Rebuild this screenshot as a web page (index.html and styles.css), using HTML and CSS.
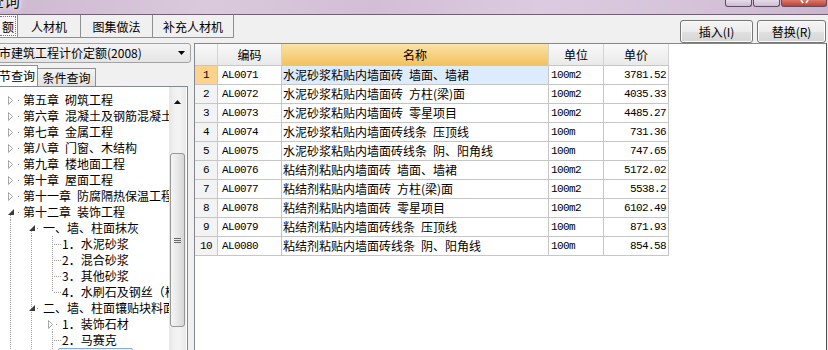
FILE: index.html
```html
<!DOCTYPE html>
<html lang="zh-CN">
<head>
<meta charset="utf-8">
<title>定额查询</title>
<link rel="stylesheet" href="styles.css">
</head>
<body>
<div class="window">
  <div class="titlebar">
    <span class="title">定额查询</span>
    <div class="winbtns">
      <span class="wb"></span>
      <span class="wb"></span>
      <span class="wb close"><svg width="9" height="4" viewBox="0 0 9 4"><path d="M1 0L3 3M8 0L6 3" stroke="#fff" stroke-width="1.6" fill="none"/></svg></span>
    </div>
  </div>

  <div class="toolbar">
    <div class="tabs">
      <div class="tab tab-active"><span class="focus">额</span></div>
      <div class="tab tab-w1">人材机</div>
      <div class="tab tab-w2">图集做法</div>
      <div class="tab tab-w3">补充人材机</div>
    </div>
    <div class="actions">
      <button class="btn btn-insert">插入(I)</button>
      <button class="btn btn-replace">替换(R)</button>
    </div>
  </div>

  <div class="main">
    <div class="left">
      <div class="combo">
        <span class="combo-text">市建筑工程计价定额(2008)</span>
        <svg class="combo-arrow" width="7" height="4" viewBox="0 0 7 4"><path d="M0 0H7L3.5 4Z" fill="#000"/></svg>
      </div>
      <div class="subtabs">
        <div class="subtab subtab-active">节查询</div>
        <div class="subtab">条件查询</div>
      </div>
      <div class="treebox">
        <div class="tree">
          <div class="node l0"><svg class="c" width="21" height="16"><path d="M8.5 4.5L12.5 8.5L8.5 12.5Z" fill="#fff" stroke="#a6a6a6"/><rect x="18" y="8" width="1" height="1" fill="#999"/></svg><span class="t">第五章&#8194;砌筑工程</span></div>
          <div class="node l0"><svg class="c" width="21" height="16"><path d="M8.5 4.5L12.5 8.5L8.5 12.5Z" fill="#fff" stroke="#a6a6a6"/><rect x="18" y="8" width="1" height="1" fill="#999"/></svg><span class="t">第六章&#8194;混凝土及钢筋混凝土工程</span></div>
          <div class="node l0"><svg class="c" width="21" height="16"><path d="M8.5 4.5L12.5 8.5L8.5 12.5Z" fill="#fff" stroke="#a6a6a6"/><rect x="18" y="8" width="1" height="1" fill="#999"/></svg><span class="t">第七章&#8194;金属工程</span></div>
          <div class="node l0"><svg class="c" width="21" height="16"><path d="M8.5 4.5L12.5 8.5L8.5 12.5Z" fill="#fff" stroke="#a6a6a6"/><rect x="18" y="8" width="1" height="1" fill="#999"/></svg><span class="t">第八章&#8194;门窗、木结构</span></div>
          <div class="node l0"><svg class="c" width="21" height="16"><path d="M8.5 4.5L12.5 8.5L8.5 12.5Z" fill="#fff" stroke="#a6a6a6"/><rect x="18" y="8" width="1" height="1" fill="#999"/></svg><span class="t">第九章&#8194;楼地面工程</span></div>
          <div class="node l0"><svg class="c" width="21" height="16"><path d="M8.5 4.5L12.5 8.5L8.5 12.5Z" fill="#fff" stroke="#a6a6a6"/><rect x="18" y="8" width="1" height="1" fill="#999"/></svg><span class="t">第十章&#8194;屋面工程</span></div>
          <div class="node l0"><svg class="c" width="21" height="16"><path d="M8.5 4.5L12.5 8.5L8.5 12.5Z" fill="#fff" stroke="#a6a6a6"/><rect x="18" y="8" width="1" height="1" fill="#999"/></svg><span class="t">第十一章&#8194;防腐隔热保温工程</span></div>
          <div class="node l0"><svg class="c" width="21" height="16"><path class="dl" d="M10.5 11V16"/><path d="M14 5V11H8Z" fill="#3a3a3a"/><rect x="18" y="8" width="1" height="1" fill="#999"/></svg><span class="t">第十二章&#8194;装饰工程</span></div>

          <div class="node l1"><svg class="c" width="21" height="16"><path class="dl" d="M10.5 0V16"/></svg><svg class="c" width="21" height="16"><path class="dl" d="M10.5 11V16"/><path d="M14 5V11H8Z" fill="#3a3a3a"/><rect x="16" y="8" width="1" height="1" fill="#999"/></svg><span class="t">一、墙、柱面抹灰</span></div>
          <div class="node l2"><svg class="c" width="21" height="16"><path class="dl" d="M10.5 0V16"/></svg><svg class="c" width="21" height="16"><path class="dl" d="M10.5 0V16"/></svg><svg class="c2" width="19" height="16"><path class="dl" d="M10.5 0V16M12 8.5H19"/></svg><span class="t">1．水泥砂浆</span></div>
          <div class="node l2"><svg class="c" width="21" height="16"><path class="dl" d="M10.5 0V16"/></svg><svg class="c" width="21" height="16"><path class="dl" d="M10.5 0V16"/></svg><svg class="c2" width="19" height="16"><path class="dl" d="M10.5 0V16M12 8.5H19"/></svg><span class="t">2．混合砂浆</span></div>
          <div class="node l2"><svg class="c" width="21" height="16"><path class="dl" d="M10.5 0V16"/></svg><svg class="c" width="21" height="16"><path class="dl" d="M10.5 0V16"/></svg><svg class="c2" width="19" height="16"><path class="dl" d="M10.5 0V16M12 8.5H19"/></svg><span class="t">3．其他砂浆</span></div>
          <div class="node l2"><svg class="c" width="21" height="16"><path class="dl" d="M10.5 0V16"/></svg><svg class="c" width="21" height="16"><path class="dl" d="M10.5 0V16"/></svg><svg class="c2" width="19" height="16"><path class="dl" d="M10.5 0V8M12 8.5H19"/></svg><span class="t">4．水刷石及钢丝（栏杆）</span></div>

          <div class="node l1"><svg class="c" width="21" height="16"><path class="dl" d="M10.5 0V16"/></svg><svg class="c" width="21" height="16"><path class="dl" d="M10.5 0V16"/><path d="M14 5V11H8Z" fill="#3a3a3a"/><rect x="16" y="8" width="1" height="1" fill="#999"/></svg><span class="t">二、墙、柱面镶贴块料面层</span></div>
          <div class="node l2"><svg class="c" width="21" height="16"><path class="dl" d="M10.5 0V16"/></svg><svg class="c" width="21" height="16"><path class="dl" d="M10.5 0V16"/></svg><svg class="c2" width="19" height="16"><path class="dl" d="M10.5 13V16"/><path d="M6.5 4.5L10.5 8.5L6.5 12.5Z" fill="#fff" stroke="#a6a6a6"/><rect x="14" y="8" width="1" height="1" fill="#999"/></svg><span class="t">1．装饰石材</span></div>
          <div class="node l2"><svg class="c" width="21" height="16"><path class="dl" d="M10.5 0V16"/></svg><svg class="c" width="21" height="16"><path class="dl" d="M10.5 0V16"/></svg><svg class="c2" width="19" height="16"><path class="dl" d="M10.5 0V16M12 8.5H19"/></svg><span class="t">2．马赛克</span></div>
          <div class="node l2"><svg class="c" width="21" height="16"><path class="dl" d="M10.5 0V16"/></svg><svg class="c" width="21" height="16"><path class="dl" d="M10.5 0V16"/></svg><svg class="c2" width="19" height="16"><path class="dl" d="M10.5 0V8M12 8.5H19"/></svg><span class="t t-sel">3．釉面瓷砖</span></div>
        </div>
        <div class="vscroll">
          <div class="sb-up"><svg width="7" height="4" viewBox="0 0 7 4"><path d="M0 4L3.5 0L7 4Z" fill="#111"/></svg></div>
          <div class="sb-thumb"><span class="grip"></span></div>
        </div>
      </div>
    </div>

    <div class="gridwrap">
      <div class="grid">
        <div class="hd"></div><div class="hd">编码</div><div class="hd hd-sel">名称</div><div class="hd">单位</div><div class="hd">单价</div>

        <div class="rn rn-sel mono">1</div><div class="cd mono">AL0071</div><div class="nm nm-sel">水泥砂浆粘贴内墙面砖&#8194;墙面、墙裙</div><div class="un mono">100m2</div><div class="pr mono">3781.52</div>
        <div class="rn mono">2</div><div class="cd mono">AL0072</div><div class="nm">水泥砂浆粘贴内墙面砖&#8194;方柱(梁)面</div><div class="un mono">100m2</div><div class="pr mono">4035.33</div>
        <div class="rn mono">3</div><div class="cd mono">AL0073</div><div class="nm">水泥砂浆粘贴内墙面砖&#8194;零星项目</div><div class="un mono">100m2</div><div class="pr mono">4485.27</div>
        <div class="rn mono">4</div><div class="cd mono">AL0074</div><div class="nm">水泥砂浆粘贴内墙面砖线条&#8194;压顶线</div><div class="un mono">100m</div><div class="pr mono">731.36</div>
        <div class="rn mono">5</div><div class="cd mono">AL0075</div><div class="nm">水泥砂浆粘贴内墙面砖线条&#8194;阴、阳角线</div><div class="un mono">100m</div><div class="pr mono">747.65</div>
        <div class="rn mono">6</div><div class="cd mono">AL0076</div><div class="nm">粘结剂粘贴内墙面砖&#8194;墙面、墙裙</div><div class="un mono">100m2</div><div class="pr mono">5172.02</div>
        <div class="rn mono">7</div><div class="cd mono">AL0077</div><div class="nm">粘结剂粘贴内墙面砖&#8194;方柱(梁)面</div><div class="un mono">100m2</div><div class="pr mono">5538.2</div>
        <div class="rn mono">8</div><div class="cd mono">AL0078</div><div class="nm">粘结剂粘贴内墙面砖&#8194;零星项目</div><div class="un mono">100m2</div><div class="pr mono">6102.49</div>
        <div class="rn mono">9</div><div class="cd mono">AL0079</div><div class="nm">粘结剂粘贴内墙面砖线条&#8194;压顶线</div><div class="un mono">100m</div><div class="pr mono">871.93</div>
        <div class="rn mono">10</div><div class="cd mono">AL0080</div><div class="nm">粘结剂粘贴内墙面砖线条&#8194;阴、阳角线</div><div class="un mono">100m</div><div class="pr mono">854.58</div>
      </div>
    </div>
  </div>
</div>
</body>
</html>
```

FILE: styles.css
```css
* { box-sizing: border-box; }

html, body {
  margin: 0;
  padding: 0;
}

body {
  width: 828px;
  height: 350px;
  overflow: hidden;
  background: #f0f0f0;
  font-family: "Noto Sans CJK SC", "Noto Sans", sans-serif;
  font-size: 12px;
  color: #000;
}

.window {
  width: 828px;
  height: 350px;
  display: flex;
  flex-direction: column;
  overflow: hidden;
}

/* ---------- title bar ---------- */
.titlebar {
  flex: 0 0 15px;
  display: flex;
  justify-content: space-between;
  align-items: flex-start;
  overflow: hidden;
  border-bottom: 1px solid #6f6172;
  background: linear-gradient(to right, #cdb8d0 0%, #dac9dd 25%, #d2bed5 45%, #dccbe0 65%, #d5c2d8 85%, #cbb5ce 100%);
}

.title {
  font-size: 16px;
  line-height: 16px;
  margin: -8px 0 0 -44px;
  white-space: nowrap;
  color: #1a1a1a;
  text-shadow: 0 0 4px #fff, 0 0 8px #fff;
}

.winbtns {
  display: flex;
  gap: 1px;
  margin-right: 1px;
}

.wb {
  width: 27px;
  height: 7px;
  border: 1px solid #5d4d63;
  border-top: 0;
  border-radius: 0 0 3px 3px;
  background: linear-gradient(#e6dbe9, #cdbdd1);
}

.wb.close {
  width: 46px;
  display: flex;
  justify-content: center;
  align-items: flex-start;
  background: linear-gradient(#d9796b, #c2402f);
}

.wb.close svg { display: block; }

/* ---------- toolbar ---------- */
.toolbar {
  flex: 0 0 28px;
  display: flex;
  justify-content: space-between;
}

.tabs {
  display: flex;
  height: 23px;
  align-self: flex-start;
  border-bottom: 1px solid #8e8f8f;
}

.tab {
  height: 22px;
  line-height: 22px;
  padding-top: 1px;
  text-align: center;
  border-right: 1px solid #8e8f8f;
  white-space: nowrap;
  font-size: 12px;
}

.tab-active {
  width: 18px;
  padding: 1px 1px 1px 0;
  line-height: 19px;
  background: #fff;
}

.focus {
  display: block;
  height: 20px;
  border: 1px dotted #777;
  border-left: 0;
  text-align: right;
  padding-right: 1px;
  background: #f7f7f7;
}

.tab-w1 { width: 63px; }
.tab-w2 { width: 72px; }
.tab-w3 { width: 81px; }

.actions {
  display: flex;
  gap: 4px;
  margin: 5px 2px 0 0;
  height: 23px;
}

.btn {
  height: 23px;
  padding: 0;
  border: 1px solid #767676;
  border-radius: 3px;
  background: linear-gradient(#f4f4f4 0%, #ececec 50%, #e0e0e0 51%, #d6d6d6 100%);
  box-shadow: inset 0 0 0 1px #fbfbfb;
  font-family: inherit;
  font-size: 12px;
  color: #000;
}

.btn-insert { width: 73px; }
.btn-replace { width: 69px; }

/* ---------- main ---------- */
.main {
  flex: 1;
  display: flex;
  min-height: 0;
}

.left {
  flex: 0 0 191px;
  display: flex;
  flex-direction: column;
  min-height: 0;
}

.combo {
  height: 20px;
  width: 195px;
  margin-left: -4px;
  flex: 0 0 20px;
  display: flex;
  align-items: center;
  justify-content: space-between;
  padding: 0 5px 0 2px;
  border: 1px solid #a3a3a3;
  border-radius: 3px;
  background: linear-gradient(#f4f4f4, #e4e4e4);
  white-space: nowrap;
}

.combo-text { line-height: 18px; }
.combo-arrow { display: block; }

.subtabs {
  flex: 0 0 21px;
  margin-top: 2px;
  display: flex;
  align-items: flex-end;
}

.subtab {
  height: 18px;
  width: 58px;
  line-height: 17px;
  text-align: center;
  border: 1px solid #8e8f8f;
  border-bottom: 0;
  border-left: 0;
  background: linear-gradient(#f3f3f3, #e1e1e1);
  white-space: nowrap;
}

.subtab-active {
  height: 21px;
  width: 42px;
  margin-left: -4px;
  line-height: 20px;
  text-align: left;
  padding-left: 2px;
  background: #fff;
  border-left: 1px solid #8e8f8f;
}

.treebox {
  flex: 1;
  min-height: 0;
  width: 188px;
  display: flex;
  border-top: 1px solid #828790;
  border-right: 1px solid #828790;
  padding-right: 1px;
  background: #fff;
  overflow: hidden;
}

.tree {
  flex: 0 0 169px;
  overflow: hidden;
  padding-top: 5px;
}

.node {
  display: flex;
  align-items: center;
  height: 16px;
  line-height: 16px;
  white-space: nowrap;
}

.c, .c2 {
  display: block;
  flex: 0 0 auto;
}

.dl {
  fill: none;
  stroke: #a0a0a0;
  stroke-width: 1;
  stroke-dasharray: 1 1;
}

.t { margin-left: 1px; }
.l0 .t { margin-left: 2px; }

.t-sel {
  margin-left: -3px;
  padding: 0 3px;
  border: 1px solid #84acdd;
  border-radius: 2px;
  line-height: 14px;
  background: linear-gradient(#eef5fd, #d9e8fb);
}

.vscroll {
  flex: 0 0 17px;
  display: flex;
  flex-direction: column;
  align-items: center;
  background: linear-gradient(to right, #e6e6e6, #f3f3f3 40%, #f3f3f3 60%, #e9e9e9);
}

.sb-up {
  height: 28px;
  padding-top: 13px;
  display: flex;
  justify-content: center;
}

.sb-up svg { display: block; }

.sb-thumb {
  margin-top: 38px;
  width: 15px;
  height: 174px;
  flex: 0 0 174px;
  border: 1px solid #979797;
  border-radius: 3px;
  background: linear-gradient(to right, #f5f5f5, #e8e8e8 50%, #d6d6d6);
  display: flex;
  align-items: center;
  justify-content: center;
}

.grip {
  width: 7px;
  height: 5px;
  background: repeating-linear-gradient(to bottom, #6a6a6a 0 1px, transparent 1px 2px);
}

/* ---------- grid ---------- */
.gridwrap {
  flex: 0 0 633px;
  margin-left: 3px;
  border-left: 1px solid #828790;
  border-top: 1px solid #828790;
  border-right: 1px solid #4f4f4f;
  background: #fff;
}

.grid {
  display: grid;
  grid-template-columns: 23px 64px 267px 55px 65px;
  grid-template-rows: 22px;
  grid-auto-rows: 19px;
  width: 474px;
}

.grid > div {
  border-right: 1px solid #c6c6c6;
  border-bottom: 1px solid #c6c6c6;
  white-space: nowrap;
  overflow: hidden;
  line-height: 18px;
}

.grid > .hd {
  text-align: center;
  line-height: 21px;
  background: linear-gradient(#f9f9f9, #e9e9e9);
  border-right-color: #d3d3d3;
}

.grid > .hd-sel {
  background: linear-gradient(#fbe2a8, #f3c25d);
}

.grid > .rn {
  text-align: center;
  background: #f3f3f3;
}

.grid > .rn-sel { background: #fdd28c; }

.nm { padding-left: 1px; }
.grid > .nm-sel { background: #ddecfc; }

.mono {
  font-family: "Liberation Mono", "DejaVu Sans Mono", monospace;
  font-size: 11px;
  letter-spacing: -0.6px;
}

.cd { padding-left: 4px; }
.un { padding-left: 2px; }
.pr { text-align: right; padding-right: 2px; }
```
